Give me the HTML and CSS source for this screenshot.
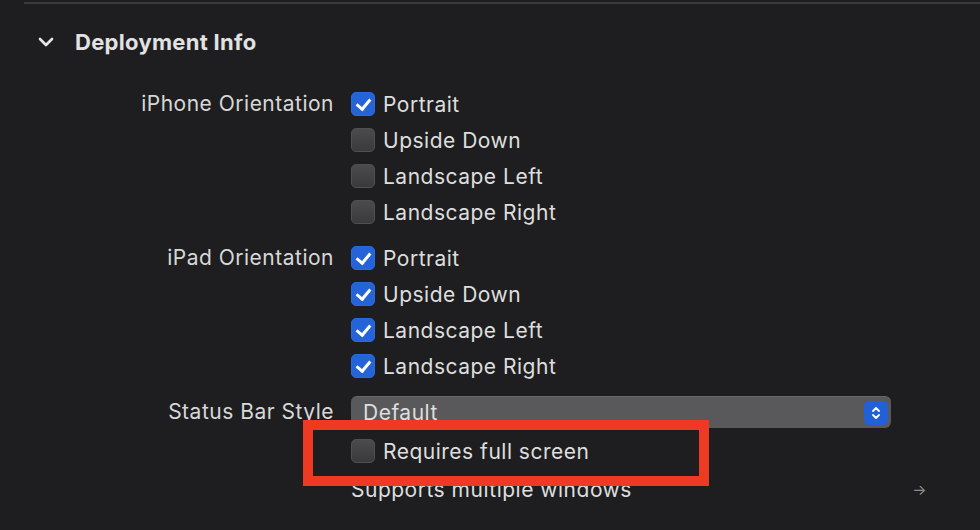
FILE: index.html
```html
<!DOCTYPE html>
<html lang="en">
<head>
    <meta charset="UTF-8">
    <meta name="viewport" content="width=device-width, initial-scale=1.0">
    <title>Deployment Info</title>
    <link rel="stylesheet" href="styles.css">
</head>
<body>
    <div class="top-rule"></div>

    <!-- Section header -->
    <div class="section-header">
        <svg class="chevron" width="16" height="10" viewBox="0 0 16 10">
            <path d="M2 2 L8 8 L14 2" fill="none" stroke="#e6e6e6" stroke-width="2.6" stroke-linecap="round" stroke-linejoin="round"/>
        </svg>
        <h2>Deployment Info</h2>
    </div>

    <div class="settings">
        <!-- iPhone -->
        <div class="group">
            <div class="label">iPhone Orientation</div>
            <div class="options">
                <div class="option"><span class="box checked"></span>Portrait</div>
                <div class="option"><span class="box"></span>Upside Down</div>
                <div class="option"><span class="box"></span>Landscape Left</div>
                <div class="option"><span class="box"></span>Landscape Right</div>
            </div>
        </div>

        <!-- iPad -->
        <div class="group">
            <div class="label">iPad Orientation</div>
            <div class="options">
                <div class="option"><span class="box checked"></span>Portrait</div>
                <div class="option"><span class="box checked"></span>Upside Down</div>
                <div class="option"><span class="box checked"></span>Landscape Left</div>
                <div class="option"><span class="box checked"></span>Landscape Right</div>
            </div>
        </div>

        <!-- Status bar -->
        <div class="group status">
            <div class="label">Status Bar Style</div>
            <div class="options">
                <div class="popup">
                    <span>Default</span>
                    <span class="stepper">
                        <svg width="12" height="16" viewBox="0 0 12 16">
                            <path d="M3 6 L6 3 L9 6 M3 10 L6 13 L9 10" fill="none" stroke="#fff" stroke-width="1.8" stroke-linecap="round" stroke-linejoin="round"/>
                        </svg>
                    </span>
                </div>
            </div>
        </div>

        <div class="group extra">
            <div class="label"></div>
            <div class="options">
                <div class="option tall"><span class="box"></span>Requires full screen</div>
                <div class="option tall supports">
                    <span>Supports multiple windows</span>
                    <span class="arrow">&#8594;</span>
                </div>
            </div>
        </div>
    </div>

    <!-- annotation box drawn over the screenshot -->
    <div class="highlight"></div>
</body>
</html>
```

FILE: styles.css
```css
body {
    margin: 0;
    background-color: #1e1e20;
    color: #dedede;
    font-family: Inter, "Liberation Sans", sans-serif;
    font-size: 21px;
    letter-spacing: 0.5px;
    width: 980px;
    height: 530px;
    overflow: hidden;
    position: relative;
}
.top-rule {
    margin: 2px 0 0 24px;
    height: 2px;
    background-color: #3a3a3c;
}
.section-header {
    display: flex;
    align-items: center;
    height: 76px;
    padding-left: 38px;
    gap: 21px;
}
.section-header h2 {
    margin: 0;
    font-size: 22px;
    font-weight: 700;
    letter-spacing: 0.3px;
    color: #e2e2e2;
}
.settings {
    display: flex;
    flex-direction: column;
    gap: 10px;
    padding-top: 6px;
}
.group {
    display: grid;
    grid-template-columns: 334px 1fr;
    column-gap: 17px;
}
.label {
    text-align: right;
    height: 36px;
    line-height: 36px;
    color: #d8d8d8;
}
.option {
    display: flex;
    align-items: center;
    gap: 8px;
    height: 36px;
    white-space: nowrap;
}
.option.tall {
    height: 38px;
}
.box {
    width: 24px;
    height: 24px;
    border-radius: 5px;
    box-sizing: border-box;
    background: linear-gradient(#4b4b4d, #3a3a3c);
    border: 1px solid #505052;
    flex-shrink: 0;
}
.box.checked {
    background: #2463d8;
    border-color: #2a6ae0;
    position: relative;
}
.box.checked::after {
    content: "";
    position: absolute;
    left: 7px;
    top: 3px;
    width: 6px;
    height: 11px;
    border-right: 3px solid #fff;
    border-bottom: 3px solid #fff;
    transform: rotate(40deg);
}
.status .options {
    display: flex;
    align-items: center;
    height: 36px;
}
.popup {
    width: 540px;
    height: 32px;
    box-sizing: border-box;
    background-color: #59595b;
    border-top: 1px solid #68686a;
    border-radius: 6px;
    display: flex;
    align-items: center;
    justify-content: space-between;
    padding: 0 3px 0 12px;
}
.stepper {
    width: 24px;
    height: 24px;
    border-radius: 5px;
    background-color: #2160d6;
    display: flex;
    align-items: center;
    justify-content: center;
}
.extra {
    margin-top: -8px;
}
.supports {
    width: 576px;
    justify-content: space-between;
}
.arrow {
    color: #8e8e90;
    font-size: 15px;
}
.highlight {
    position: absolute;
    left: 303px;
    top: 420px;
    width: 406px;
    height: 66px;
    box-sizing: border-box;
    border: 10px solid #ee3a22;
}
```
